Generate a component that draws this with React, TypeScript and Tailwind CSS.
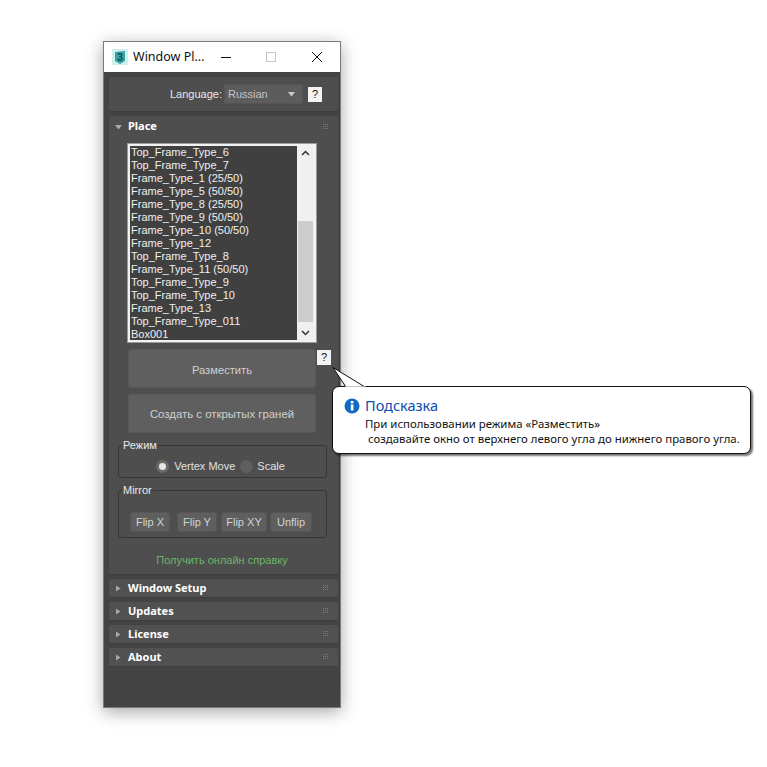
const items = [
  "Top_Frame_Type_6","Top_Frame_Type_7","Frame_Type_1 (25/50)","Frame_Type_5 (50/50)","Frame_Type_8 (25/50)",
  "Frame_Type_9 (50/50)","Frame_Type_10 (50/50)","Frame_Type_12","Top_Frame_Type_8","Frame_Type_11 (50/50)",
  "Top_Frame_Type_9","Top_Frame_Type_10","Frame_Type_13","Top_Frame_Type_011","Box001",
];

function Grip() {
  return (
    <svg width="6" height="6" viewBox="0 0 6 6" className="shrink-0">
      {[0, 2, 4].map((y) => [0, 2, 4].map((x) => <rect key={`${x}${y}`} x={x} y={y} width="1" height="1" fill="#7d7d7d" />))}
    </svg>
  );
}

function Rollout({ title }: { title: string }) {
  return (
    <div className="h-[19px] rounded-[2px] bg-[#515151] border-b border-[#3e3e3e] flex items-center pl-[6px] pr-[9px]">
      <svg width="6" height="7" viewBox="0 0 6 7" className="shrink-0"><path d="M1 0.5L5.5 3.5L1 6.5Z" fill="#a8a8a8" /></svg>
      <span className="ml-[7px] text-[11px] font-bold text-white flex-1 [font-family:'Noto_Sans',sans-serif]">{title}</span>
      <Grip />
    </div>
  );
}

function Help({ cls }: { cls: string }) {
  return (
    <div className={`w-[14px] h-[15px] bg-[#f3f3f3] text-[#111] text-[11px] leading-[15px] text-center ${cls}`}>?</div>
  );
}

function Flip({ label, w }: { label: string; w: string }) {
  return <div className={`h-[20px] ${w} rounded-[3px] bg-[#5f5f5f] border border-[#565656] text-[#d2d2d2] text-[11px] leading-[18px] text-center`}>{label}</div>;
}

export default function App() {
  return (
    <div className="w-[767px] h-[767px] bg-white pt-[41px] pl-[103px] [font-family:'Liberation_Sans',Arial,sans-serif] relative overflow-hidden">
      <div className="w-[238px] h-[667px] border border-[#7a7a7a] bg-[#434343] shadow-[0_4px_16px_rgba(0,0,0,0.35)] flex flex-col">
        <div className="h-[30px] bg-white flex items-center shrink-0 pl-[8px]">
          <svg width="16" height="16" viewBox="0 0 16 16" className="shrink-0">
            <rect width="16" height="16" fill="#cfeeee" />
            <path d="M3 3 L13 2 L13 12 L8 15 L3 12Z" fill="#37a5a5" />
            <text x="8" y="12" textAnchor="middle" fontSize="11" fontWeight="700" fill="#0f4f55" fontFamily="Liberation Sans">3</text>
          </svg>
          <span className="ml-[5px] text-[12.5px] text-[#111] [font-family:'Noto_Sans',sans-serif] w-[70px] whitespace-nowrap">Window Pl...</span>
          <svg width="12" height="12" viewBox="0 0 12 12" className="ml-[17px]"><path d="M1 6.5H11" stroke="#111" /></svg>
          <svg width="10" height="10" viewBox="0 0 10 10" className="ml-[34px]"><rect x="0.5" y="0.5" width="9" height="9" fill="none" stroke="#c4c4c4" /></svg>
          <svg width="12" height="12" viewBox="0 0 12 12" className="ml-[35px]"><path d="M1 1L11 11M11 1L1 11" stroke="#111" /></svg>
        </div>

        <div className="flex flex-col pl-[5px] pr-[2px] pt-[5px]">
          <div className="h-[35px] rounded-[2px] bg-[#4e4e4e] border-b border-[#3e3e3e] flex items-center justify-end pr-[16px]">
            <span className="text-[11px] text-[#e8e8e8] mr-[1px]">Language:</span>
            <div className="w-[79px] h-[20px] bg-[#5c5c5c] border border-[#555] flex items-center pl-[3px] pr-[7px] ml-[1px] text-[11px] text-[#c4c4c4]">
              <span className="flex-1">Russian</span>
              <svg width="7" height="5" viewBox="0 0 7 5"><path d="M0 0H7L3.5 4.5Z" fill="#ccc" /></svg>
            </div>
            <Help cls="ml-[5px]" />
          </div>

          <div className="mt-[4px] h-[459px] rounded-[2px] bg-[#4e4e4e] border-b border-[#3e3e3e] relative flex flex-col">
            <div className="h-[21px] flex items-center pl-[6px] pr-[9px] shrink-0">
              <svg width="7" height="6" viewBox="0 0 7 6" className="shrink-0"><path d="M0 1H7L3.5 5.5Z" fill="#a8a8a8" /></svg>
              <span className="ml-[6px] text-[11px] font-bold text-white flex-1 [font-family:'Noto_Sans',sans-serif]">Place</span>
              <Grip />
            </div>

            <div className="ml-[19px] mt-[7px] w-[188px] h-[198px] border-2 border-[#f2f2f2] outline outline-1 outline-[#9a9a9a] bg-[#404040] flex overflow-hidden">
              <div className="flex-1 pl-[1px] text-[11px] leading-[13px] text-[#f0f0f0] whitespace-nowrap">
                {items.map((t) => <div key={t}>{t}</div>)}
              </div>
              <div className="w-[17px] bg-[#f0f0f0] flex flex-col items-center justify-between">
                <svg width="9" height="17" viewBox="0 0 9 17"><path d="M1 9L4.5 5.5L8 9" fill="none" stroke="#333" strokeWidth="1.5" /></svg>
                <div className="w-[15px] h-[101px] bg-[#cdcdcd] mt-[57px]" />
                <svg width="9" height="17" viewBox="0 0 9 17"><path d="M1 8L4.5 11.5L8 8" fill="none" stroke="#333" strokeWidth="1.5" /></svg>
              </div>
            </div>

            <div className="ml-[19px] mt-[7px] flex items-start">
              <div className="w-[188px] h-[39px] rounded-[3px] bg-[#5f5f5f] border border-[#595959] flex items-center justify-center text-[11.2px] text-[#d0d0d0] pt-[3px]">Разместить</div>
              <Help cls="ml-[1px] mt-[1px]" />
            </div>
            <div className="ml-[19px] mt-[6px] w-[188px] h-[39px] rounded-[3px] bg-[#5f5f5f] border border-[#595959] flex items-center justify-center text-[11.4px] text-[#d0d0d0] pt-[3px]">Создать с открытых граней</div>

            <fieldset className="ml-[9px] mt-[6px] w-[209px] h-[39px] border border-[#363636] rounded-[3px]">
              <legend className="ml-[3px] px-[1px] text-[11px] leading-[13px] text-[#e8e8e8]">Режим</legend>
              <div className="flex items-center justify-center h-[25px] text-[11px] text-[#e0e0e0] pr-[4px] pt-[3px]">
                <span className="w-[13px] h-[13px] rounded-full bg-[#6a6a6a] flex items-center justify-center"><span className="w-[7px] h-[7px] rounded-full bg-[#e6e6e6]" /></span>
                <span className="ml-[5px]">Vertex Move</span>
                <span className="ml-[5px] w-[13px] h-[13px] rounded-full bg-[#5f5f5f]" />
                <span className="ml-[4px]">Scale</span>
              </div>
            </fieldset>

            <fieldset className="ml-[9px] mt-[6px] w-[209px] h-[54px] border border-[#363636] rounded-[3px]">
              <legend className="ml-[3px] px-[1px] text-[11px] leading-[13px] text-[#e8e8e8]">Mirror</legend>
              <div className="flex pl-[11px] mt-[15px]">
                <Flip label="Flip X" w="w-[40px]" />
                <div className="ml-[7px]"><Flip label="Flip Y" w="w-[40px]" /></div>
                <div className="ml-[4px]"><Flip label="Flip XY" w="w-[46px]" /></div>
                <div className="ml-[3px]"><Flip label="Unflip" w="w-[42px]" /></div>
              </div>
            </fieldset>

            <div className="mt-[14px] pr-[3px] text-center text-[11px] text-[#6ab56a]">Получить онлайн справку</div>
          </div>

          <div className="mt-[4px] flex flex-col gap-[4px]">
            {["Window Setup", "Updates", "License", "About"].map((t) => <Rollout key={t} title={t} />)}
          </div>
        </div>
      </div>

      <div className="absolute left-[332px] top-[367px] w-[420px] h-[88px]">
        <svg width="35" height="21" viewBox="0 0 35 21" className="absolute left-0 top-0 z-10">
          <path d="M1 0.5L14 20H33Z" fill="#fff" stroke="#111" />
          <path d="M13 20.5H34" stroke="#fff" strokeWidth="2" />
        </svg>
        <div className="absolute left-0 top-[19px] w-[419px] h-[68px] bg-white border border-[#111] rounded-[7px] shadow-[2px_2px_2px_rgba(0,0,0,0.55)] pl-[11px] pt-[10px]">
          <div className="flex items-center h-[18px]">
            <svg width="16" height="16" viewBox="0 0 16 16"><circle cx="8" cy="8" r="7.5" fill="#1469c4" /><rect x="6.8" y="6.5" width="2.6" height="6" fill="#fff" /><rect x="6.8" y="3" width="2.6" height="2.4" fill="#fff" /></svg>
            <span className="ml-[5px] text-[14.5px] text-[#0a4db0] [font-family:'Noto_Sans',sans-serif]">Подсказка</span>
          </div>
          <div className="pl-[21px] mt-[1px] text-[11.4px] leading-[15px] text-[#111] whitespace-pre [font-family:'Noto_Sans',sans-serif]">
            <div>При использовании режима «Разместить»</div>
            <div> создавайте окно от верхнего левого угла до нижнего правого угла.</div>
          </div>
        </div>
      </div>
    </div>
  );
}
